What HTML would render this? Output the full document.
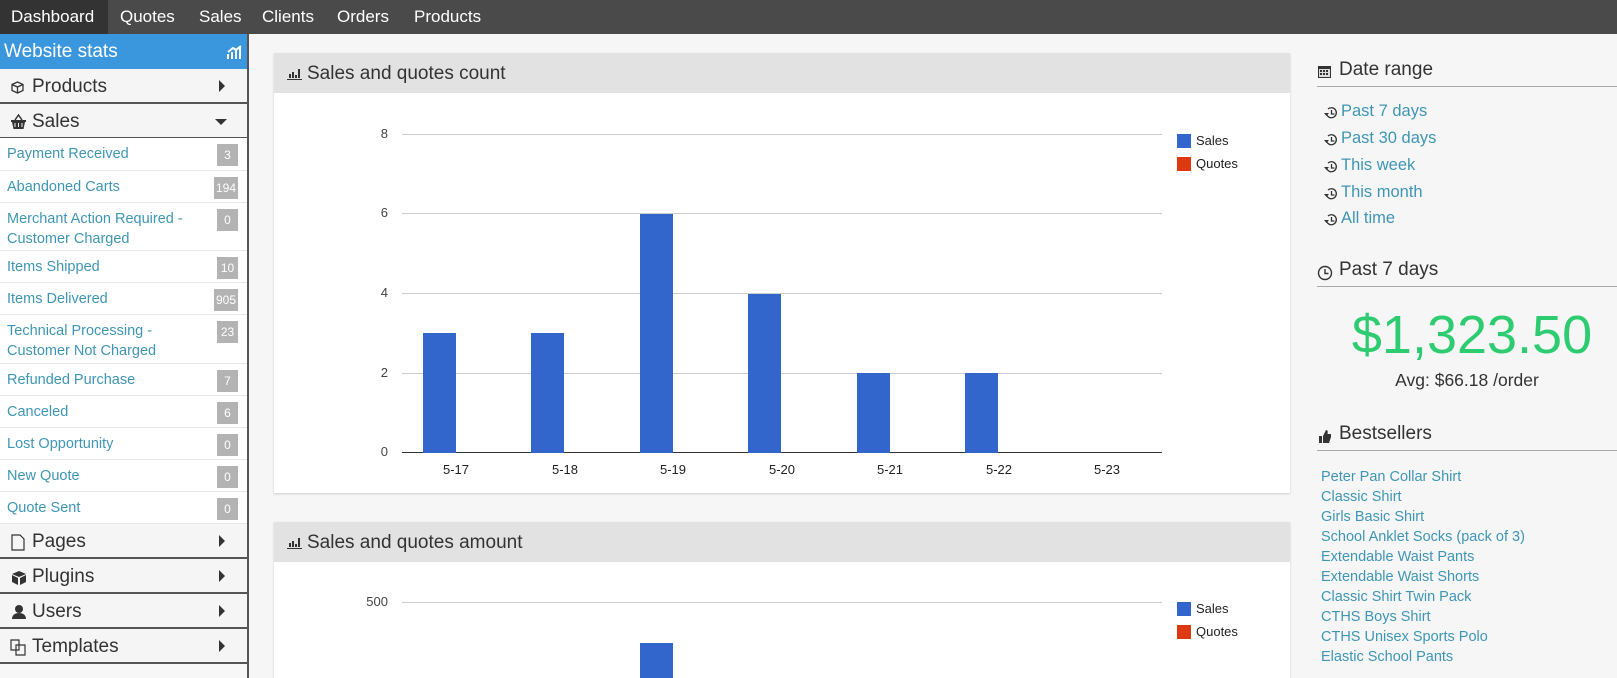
<!DOCTYPE html>
<html><head><meta charset="utf-8"><style>
*{margin:0;padding:0;box-sizing:border-box}
body{width:1617px;height:678px;overflow:hidden;background:#f6f6f6;font-family:"Liberation Sans",sans-serif;position:relative}
.a{position:absolute}
.nav{left:0;top:0;width:1617px;height:34px;background:#4a4a4a}
.nav span{position:absolute;top:0;height:34px;line-height:33px;color:#fff;font-size:17px}
.side{left:0;top:34px;width:249px;height:644px;background:#f7f7f7;border-right:2px solid #555}
.hdr{left:0;top:34px;width:247px;height:35px;background:#3a97dd;color:#fff;font-size:19px;line-height:35px;padding-left:4px}
.sec{left:0;width:247px;height:35px;border-bottom:2px solid #555;font-size:19px;color:#333;line-height:36px;padding-left:32px;background:#f5f5f5}
.sec .ar{position:absolute;right:22px;top:11px;width:0;height:0;border-left:6px solid #333;border-top:6px solid transparent;border-bottom:6px solid transparent}
.it{left:0;width:247px;background:#fff;border-bottom:1px solid #e6e6e6;color:#3f96b4;font-size:14.5px;line-height:20px;padding:6px 7px}
.bd{position:absolute;right:9px;top:6px;height:22px;min-width:21px;padding:0 2px;background:#b3b3b3;color:#fff;font-size:12px;line-height:22px;text-align:center}
.panel{left:274px;width:1016px;background:#fff;box-shadow:0 1px 2px #ccc}
.ph{left:274px;width:1016px;height:40px;background:#e2e2e2;font-size:19px;color:#333;line-height:42px;padding-left:33px}
.gl{height:1px;background:#ccc;left:402px;width:760px}
.yl{font-size:13px;color:#444;width:40px;text-align:right;left:348px}
.bar{background:#3366cc;width:33px}
.xl{font-size:13px;color:#222;width:60px;text-align:center;top:462px}
.rh{left:1317px;width:300px;font-size:19px;color:#333;border-bottom:1px solid #aaa;height:31px;padding-left:22px;padding-top:3px}
.dl{left:1323px;font-size:16.5px;color:#3f96b4;padding-left:18px}
.bs{left:1321px;font-size:14.5px;color:#3f96b4}
</style></head><body>
<div class="a nav">
<span style="left:0;width:108px;background:#333;padding-left:11px">Dashboard</span>
<span style="left:120px">Quotes</span><span style="left:199px">Sales</span><span style="left:262px">Clients</span><span style="left:337px">Orders</span><span style="left:414px">Products</span>
</div>
<div class="a side"></div>
<div class="a hdr">Website stats<svg class="a" style="left:227px;top:11px" width="15" height="15" viewBox="0 0 15 15"><path d="M1 14V9M5 14V7M9 14V5M13 14V2M1 7L6 3 9 5 14 1" stroke="#fff" stroke-width="2" fill="none"/></svg></div>
<div class="a sec" style="top:69px"><svg class="a" style="left:10px;top:11px" width="15" height="15" viewBox="0 0 15 15"><path d="M2 4.5L7.5 2 13 4.5v6L7.5 13 2 10.5zM2 4.5L7.5 7 13 4.5M7.5 7v6" stroke="#333" fill="none" stroke-width="1.3"/></svg>Products<div class="ar"></div></div>
<div class="a sec" style="top:104px"><svg class="a" style="left:10px;top:10px" width="17" height="16" viewBox="0 0 17 16"><path d="M5 6L8.5 1 12 6" stroke="#333" fill="none" stroke-width="1.5"/><path d="M1 6h15v2h-1l-1.5 7h-10L2 8H1z" fill="#333"/><path d="M5 9v4M8.5 9v4M12 9v4" stroke="#f5f5f5"/></svg>Sales<div class="ar" style="border:none;border-top:6px solid #333;border-left:6px solid transparent;border-right:6px solid transparent;top:15px;right:20px"></div></div>

<div class="a it" style="top:138px;height:33px">Payment Received<span class="bd">3</span></div>
<div class="a it" style="top:171px;height:32px">Abandoned Carts<span class="bd">194</span></div>
<div class="a it" style="top:203px;height:48px">Merchant Action Required -<br>Customer Charged<span class="bd">0</span></div>
<div class="a it" style="top:251px;height:32px">Items Shipped<span class="bd">10</span></div>
<div class="a it" style="top:283px;height:32px">Items Delivered<span class="bd">905</span></div>
<div class="a it" style="top:315px;height:49px">Technical Processing -<br>Customer Not Charged<span class="bd">23</span></div>
<div class="a it" style="top:364px;height:32px">Refunded Purchase<span class="bd">7</span></div>
<div class="a it" style="top:396px;height:32px">Canceled<span class="bd">6</span></div>
<div class="a it" style="top:428px;height:32px">Lost Opportunity<span class="bd">0</span></div>
<div class="a it" style="top:460px;height:32px">New Quote<span class="bd">0</span></div>
<div class="a it" style="top:492px;height:32px">Quote Sent<span class="bd">0</span></div>

<div class="a sec" style="top:524px"><svg class="a" style="left:11px;top:10px" width="14" height="17" viewBox="0 0 14 17"><path d="M1 1h8l4 4v11H1z" stroke="#333" fill="none" stroke-width="1.2"/></svg>Pages<div class="ar"></div></div>
<div class="a sec" style="top:559px"><svg class="a" style="left:11px;top:11px" width="16" height="15" viewBox="0 0 16 15"><path d="M8 1l7 3-7 3-7-3zM1 5l6 3v7l-6-3zM15 5l-6 3v7l6-3z" fill="#333"/></svg>Plugins<div class="ar"></div></div>
<div class="a sec" style="top:594px"><svg class="a" style="left:11px;top:10px" width="16" height="16" viewBox="0 0 16 16"><circle cx="8" cy="5" r="4" fill="#333"/><path d="M1 15c0-4 3-6 7-6s7 2 7 6z" fill="#333"/></svg>Users<div class="ar"></div></div>
<div class="a sec" style="top:629px"><svg class="a" style="left:10px;top:10px" width="17" height="17" viewBox="0 0 17 17"><path d="M1 1h8v10H1z M6 6h9v10H6z" stroke="#333" fill="#f5f5f5" stroke-width="1.2"/></svg>Templates<div class="ar"></div></div>

<div class="a panel" style="top:53px;height:440px"></div>
<div class="a ph" style="top:53px"><svg class="a" style="left:13px;top:14px" width="15" height="13" viewBox="0 0 15 13"><path d="M2 7h2v4H2zM5 5h2v6H5zM8 8h2v3H8zM11 2h2v9h-2zM0 12h15v1H0z" fill="#333"/></svg>Sales and quotes count</div>
<div class="a gl" style="top:134px"></div><div class="a gl" style="top:213px"></div><div class="a gl" style="top:293px"></div><div class="a gl" style="top:373px"></div>
<div class="a gl" style="top:452px;background:#333"></div>
<div class="a yl" style="top:126px">8</div><div class="a yl" style="top:205px">6</div><div class="a yl" style="top:285px">4</div><div class="a yl" style="top:365px">2</div><div class="a yl" style="top:444px">0</div>
<div class="a bar" style="left:423px;top:333px;height:120px"></div>
<div class="a bar" style="left:531px;top:333px;height:120px"></div>
<div class="a bar" style="left:640px;top:214px;height:239px"></div>
<div class="a bar" style="left:748px;top:294px;height:159px"></div>
<div class="a bar" style="left:857px;top:373px;height:80px"></div>
<div class="a bar" style="left:965px;top:373px;height:80px"></div>
<div class="a xl" style="left:426px">5-17</div><div class="a xl" style="left:535px">5-18</div><div class="a xl" style="left:643px">5-19</div><div class="a xl" style="left:752px">5-20</div><div class="a xl" style="left:860px">5-21</div><div class="a xl" style="left:969px">5-22</div><div class="a xl" style="left:1077px">5-23</div>
<div class="a" style="left:1177px;top:134px;width:14px;height:14px;background:#3366cc"></div>
<div class="a" style="left:1177px;top:157px;width:14px;height:14px;background:#dc3912"></div>
<div class="a" style="left:1196px;top:133px;font-size:13px;color:#222">Sales</div>
<div class="a" style="left:1196px;top:156px;font-size:13px;color:#222">Quotes</div>

<div class="a panel" style="top:522px;height:156px"></div>
<div class="a ph" style="top:522px"><svg class="a" style="left:13px;top:14px" width="15" height="13" viewBox="0 0 15 13"><path d="M2 7h2v4H2zM5 5h2v6H5zM8 8h2v3H8zM11 2h2v9h-2zM0 12h15v1H0z" fill="#333"/></svg>Sales and quotes amount</div>
<div class="a gl" style="top:602px"></div>
<div class="a yl" style="top:594px">500</div>
<div class="a bar" style="left:640px;top:643px;height:35px"></div>
<div class="a" style="left:1177px;top:602px;width:14px;height:14px;background:#3366cc"></div>
<div class="a" style="left:1177px;top:625px;width:14px;height:14px;background:#dc3912"></div>
<div class="a" style="left:1196px;top:601px;font-size:13px;color:#222">Sales</div>
<div class="a" style="left:1196px;top:624px;font-size:13px;color:#222">Quotes</div>

<div class="a rh" style="top:56px"><svg class="a" style="left:0;top:8px" width="15" height="15" viewBox="0 0 15 15"><path d="M1 2h13v12H1z" fill="#333"/><path d="M2 5h11v8H2z" fill="#ddd"/><path d="M3 6h2v2H3zM6 6h2v2H6zM9 6h2v2H9zM3 9h2v2H3zM6 9h2v2H6zM9 9h2v2H9z" fill="#333"/></svg>Date range</div>
<svg width="0" height="0" style="position:absolute"><defs><symbol id="h" viewBox="0 0 16 16"><path d="M3.5 9A5 5 0 1 0 5 4" stroke="#333" fill="none" stroke-width="1.3"/><path d="M1 8l2.5 3L6 8z" fill="#333"/><path d="M8.5 5v4h3" stroke="#333" fill="none" stroke-width="1.3"/></symbol></defs></svg>
<div class="a dl" style="top:102px"><svg class="a" style="left:0;top:3px" width="16" height="16"><use href="#h"/></svg>Past 7 days</div>
<div class="a dl" style="top:129px"><svg class="a" style="left:0;top:3px" width="16" height="16"><use href="#h"/></svg>Past 30 days</div>
<div class="a dl" style="top:156px"><svg class="a" style="left:0;top:3px" width="16" height="16"><use href="#h"/></svg>This week</div>
<div class="a dl" style="top:183px"><svg class="a" style="left:0;top:3px" width="16" height="16"><use href="#h"/></svg>This month</div>
<div class="a dl" style="top:209px"><svg class="a" style="left:0;top:3px" width="16" height="16"><use href="#h"/></svg>All time</div>
<div class="a rh" style="top:256px"><svg class="a" style="left:0;top:9px" width="16" height="16" viewBox="0 0 16 16"><circle cx="8" cy="8" r="6.5" stroke="#333" fill="none" stroke-width="1.4"/><path d="M8 4v4.5h3.5" stroke="#333" fill="none" stroke-width="1.4"/></svg>Past 7 days</div>
<div class="a" style="left:1322px;width:300px;top:304px;text-align:center;font-size:54px;color:#2ecc71;line-height:62px">$1,323.50</div>
<div class="a" style="left:1317px;width:300px;top:370px;text-align:center;font-size:17.5px;color:#333">Avg: $66.18 /order</div>
<div class="a rh" style="top:420px"><svg class="a" style="left:1px;top:9px" width="14" height="15" viewBox="0 0 14 15"><path d="M1 7h3v7H1zM5 7l3-6c2 0 2 2 1.5 4H13v3l-2 6H5z" fill="#333"/></svg>Bestsellers</div>
<div class="a bs" style="top:469px">Peter Pan Collar Shirt</div>
<div class="a bs" style="top:489px">Classic Shirt</div>
<div class="a bs" style="top:509px">Girls Basic Shirt</div>
<div class="a bs" style="top:529px">School Anklet Socks (pack of 3)</div>
<div class="a bs" style="top:549px">Extendable Waist Pants</div>
<div class="a bs" style="top:569px">Extendable Waist Shorts</div>
<div class="a bs" style="top:589px">Classic Shirt Twin Pack</div>
<div class="a bs" style="top:609px">CTHS Boys Shirt</div>
<div class="a bs" style="top:629px">CTHS Unisex Sports Polo</div>
<div class="a bs" style="top:649px">Elastic School Pants</div>
</body></html>
